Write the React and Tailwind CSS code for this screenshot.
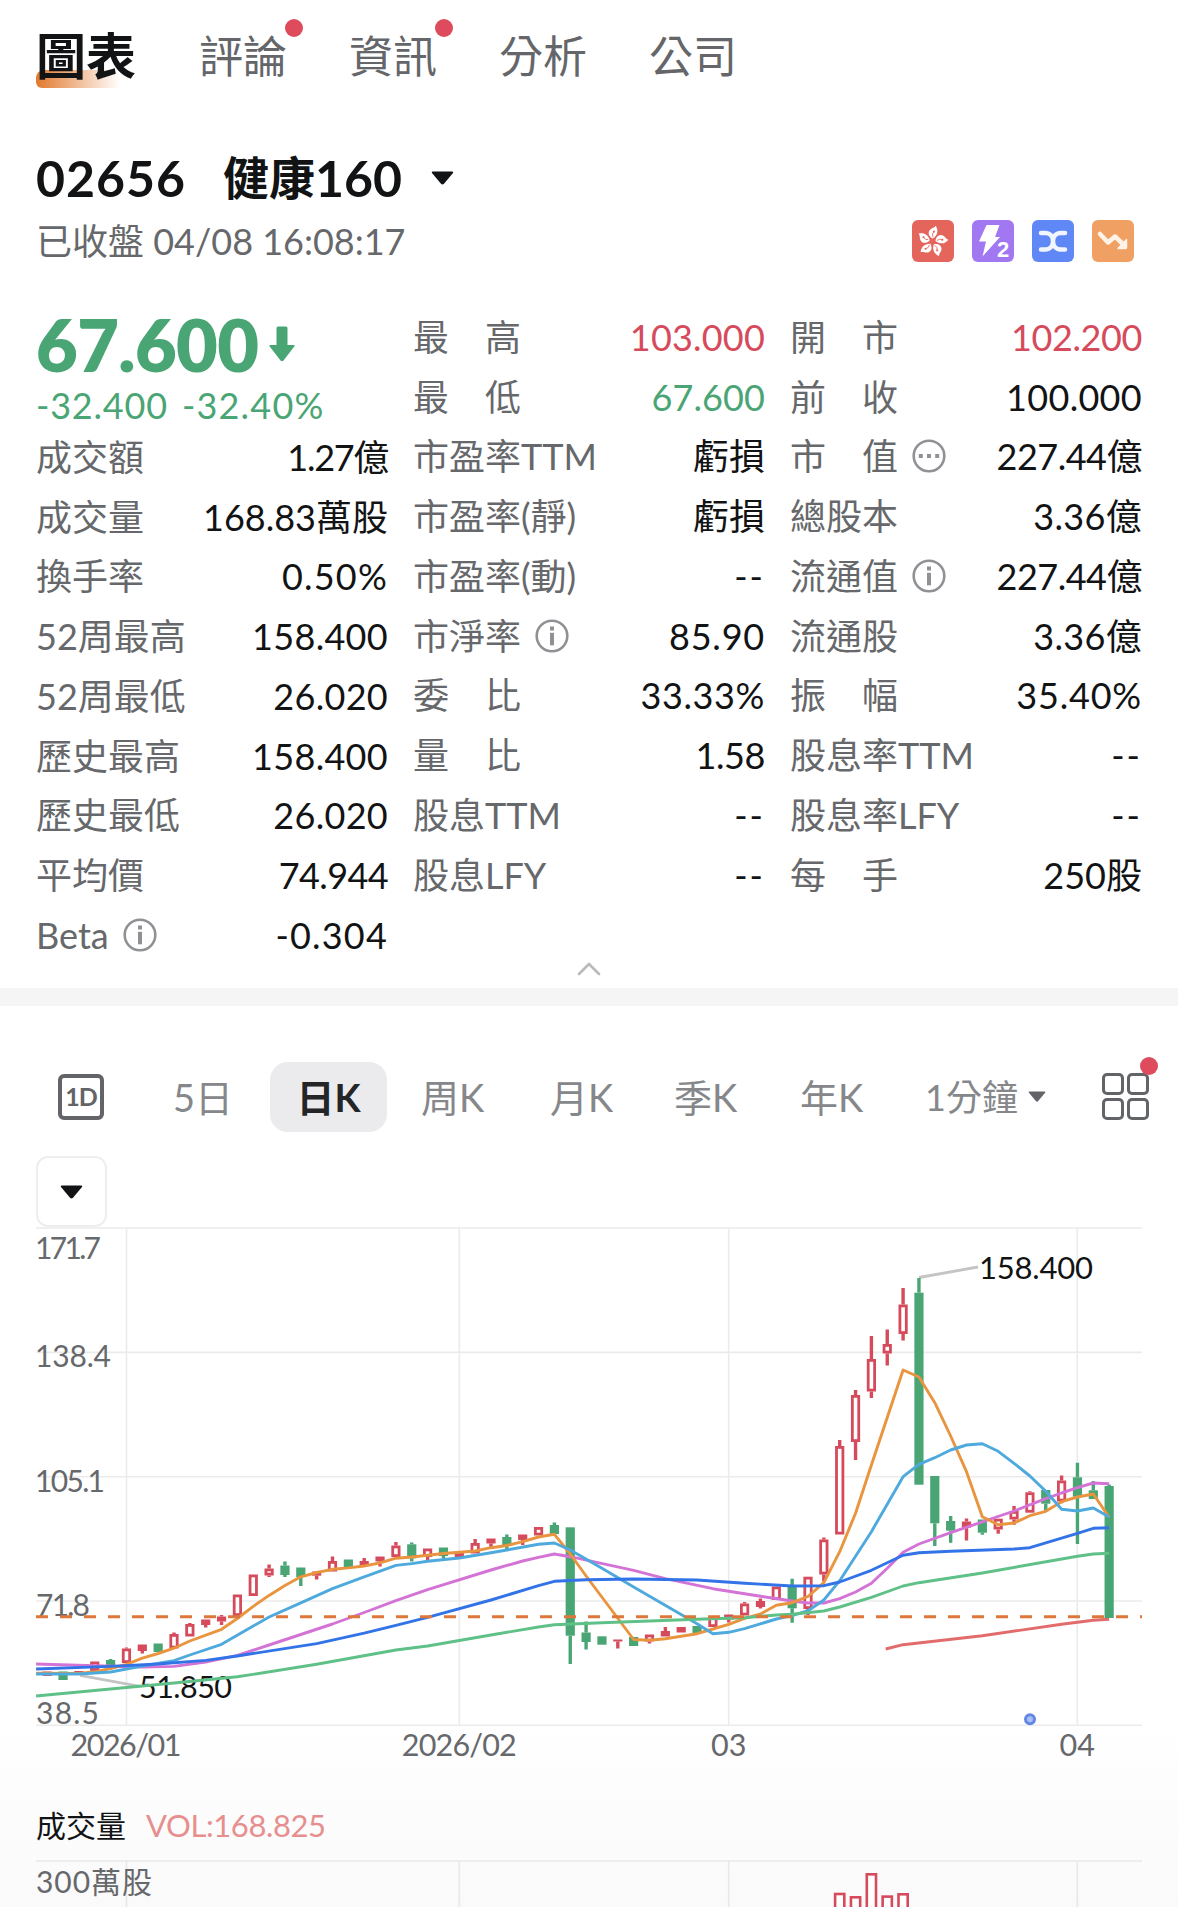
import { ChevronUp } from "lucide-react";

const UP = "#d64b5c";
const DOWN = "#4aa574";

const tabs = [
  { text: "評論", dot: true },
  { text: "資訊", dot: true },
  { text: "分析" },
  { text: "公司" },
];

// [label, value, icon, value classes]
const colA = [
  ["成交額", "1.27億", null, "tracking-[-1.3px]"],
  ["成交量", "168.83萬股"],
  ["換手率", "0.50%", null, "tracking-[1.2px]"],
  ["52周最高", "158.400", null, "tracking-[0.3px]"],
  ["52周最低", "26.020", null, "tracking-[0.3px]"],
  ["歷史最高", "158.400", null, "tracking-[0.3px]"],
  ["歷史最低", "26.020", null, "tracking-[0.3px]"],
  ["平均價", "74.944", null, "tracking-[-0.6px]"],
  ["Beta", "-0.304", "info", "tracking-[1.2px]"],
];

const colB = [
  ["最　高", "103.000", null, "text-[#d64b5c] tracking-[0.2px]"],
  ["最　低", "67.600", null, "text-[#4aa574] tracking-[0.1px]"],
  ["市盈率TTM", "虧損"],
  ["市盈率(靜)", "虧損"],
  ["市盈率(動)", "--", null, "tracking-[2px]"],
  ["市淨率", "85.90", "info", "tracking-[0.8px]"],
  ["委　比", "33.33%", null, "tracking-[0.6px]"],
  ["量　比", "1.58", null, "tracking-[-0.4px]"],
  ["股息TTM", "--", null, "tracking-[2px]"],
  ["股息LFY", "--", null, "tracking-[2px]"],
];

const colC = [
  ["開　市", "102.200", null, "text-[#d64b5c] tracking-[-0.4px]"],
  ["前　收", "100.000", null, "tracking-[0.3px]"],
  ["市　值", "227.44億", "more", "tracking-[-0.5px]"],
  ["總股本", "3.36億", null, "tracking-[0.3px]"],
  ["流通值", "227.44億", "info", "tracking-[-0.5px]"],
  ["流通股", "3.36億", null, "tracking-[0.3px]"],
  ["振　幅", "35.40%", null, "tracking-[0.8px]"],
  ["股息率TTM", "--", null, "tracking-[2px]"],
  ["股息率LFY", "--", null, "tracking-[2px]"],
  ["每　手", "250股"],
];

// [kind, body top, body bottom, high, low]  h = hollow up, r = solid up, g = down
const candles = [
  ["r", 1671.5, 1676],
  ["g", 1671.5, 1680],
  ["r", 1671, 1675],
  ["h", 1661.5, 1671],
  ["g", 1660, 1667, 1659],
  ["h", 1648.5, 1663, 1647.5],
  ["r", 1644.5, 1651, 1644.5, 1653.5],
  ["g", 1643.5, 1652],
  ["h", 1634, 1648.5, 1632.5],
  ["h", 1624, 1636.5, 1623],
  ["r", 1619.5, 1625, 1619.5, 1627.5],
  ["r", 1616.5, 1621.5, 1615, 1625],
  ["h", 1594.5, 1616],
  ["h", 1574.5, 1596],
  ["h", 1568.5, 1575.5, 1564.5, 1577],
  ["g", 1565.5, 1575, 1561.5, 1577],
  ["g", 1567.5, 1577, 1567.5, 1586],
  ["r", 1571.5, 1575.7, 1571.5, 1579.5],
  ["h", 1561, 1571.5, 1556.5],
  ["g", 1559.5, 1567],
  ["r", 1561, 1566, 1558],
  ["h", 1556.5, 1561.5, 1556.5, 1566.5],
  ["h", 1545.5, 1557, 1542],
  ["g", 1544.3, 1558.3, 1542.5, 1561.5],
  ["h", 1548.5, 1557, 1548.5, 1560.5],
  ["g", 1547.5, 1556, 1547.5, 1558.5],
  ["r", 1553, 1557.5],
  ["h", 1543, 1553.5, 1539],
  ["r", 1538.5, 1543.5, 1538.5, 1547],
  ["g", 1537, 1545, 1534.5, 1551],
  ["r", 1534.5, 1540, 1534.5, 1545],
  ["h", 1527, 1535.5],
  ["g", 1525, 1534, 1522.5, 1535.5],
  ["g", 1527.3, 1635.7, 1527.3, 1664],
  ["g", 1632.5, 1642, 1621.5, 1649.5],
  ["g", 1636.3, 1644.7],
  ["r", 1639.5, 1641.5, 1639.5, 1648.5],
  ["g", 1637, 1646],
  ["h", 1634.5, 1641.5, 1634.5, 1643.5],
  ["r", 1631, 1636.5, 1627],
  ["r", 1627, 1632.5],
  ["g", 1626, 1633.5],
  ["h", 1616, 1627],
  ["r", 1614.5, 1619.5, 1614.5, 1622.5],
  ["h", 1603.5, 1615.5, 1602],
  ["r", 1601, 1607, 1598.5, 1608.5],
  ["h", 1586.5, 1600],
  ["g", 1587, 1608.3, 1578.7, 1622.7],
  ["h", 1576.7, 1609, 1576.7, 1615],
  ["h", 1539.5, 1574.5, 1537.5, 1581.5],
  ["h", 1446, 1534.5, 1440],
  ["h", 1395, 1442, 1390, 1460],
  ["h", 1359, 1391.5, 1336, 1398],
  ["h", 1344, 1353.5, 1329.5, 1365.5],
  ["h", 1304.5, 1334, 1288, 1340.5],
  ["g", 1292.7, 1484.7, 1278],
  ["g", 1476, 1523.3, 1476, 1546],
  ["g", 1521, 1530.7, 1516, 1542.7],
  ["r", 1521.5, 1527.5, 1518.5, 1540.5],
  ["g", 1519.5, 1532.7, 1519.5, 1534.7],
  ["h", 1518.7, 1529.5, 1518.7, 1533.7],
  ["h", 1511, 1519.5, 1506, 1524.7],
  ["h", 1492.3, 1512.7, 1491.3],
  ["g", 1490, 1503.7, 1490, 1511.7],
  ["h", 1480.5, 1501.5, 1475.5, 1503.3],
  ["g", 1477.3, 1496.7, 1462.7, 1544],
  ["g", 1490.3, 1499, 1481],
  ["g", 1486, 1618, 1484.5],
];

// moving averages, [candle index, y]
const averages = [
  {
    color: "#d473d6",
    pts: [[-0.7, 1664], [3, 1665.7], [6, 1667], [8, 1666.4], [10, 1662], [12, 1655.4], [14, 1645], [18, 1624], [20, 1612.5], [22, 1600.7], [24, 1589.7], [28, 1570], [30, 1561], [31, 1557.3], [32, 1554], [33, 1556.7], [37, 1570.3], [39, 1578.7], [42, 1588.7], [45, 1596.3], [47, 1601], [48, 1603], [49, 1603], [50, 1598.7], [51, 1592], [52, 1583.3], [53, 1568.3], [54, 1552.3], [55, 1544], [57, 1532.7], [61, 1511], [63, 1498.7], [64, 1493], [65, 1487.7], [66, 1483], [67, 1483.7]],
  },
  {
    color: "#e9943f",
    pts: [[-0.7, 1673.2], [2, 1673.5], [3, 1671.8], [4, 1668.5], [5, 1664.3], [6, 1658.2], [7, 1653.5], [8, 1648.2], [9, 1641], [11, 1629.3], [12, 1618.5], [13, 1606.4], [14, 1595.4], [15, 1585.4], [16, 1576.8], [17, 1572.5], [18, 1569.3], [19, 1567.9], [20, 1566], [21, 1562.9], [22, 1558.2], [23, 1557], [25, 1553.5], [27, 1551], [28, 1547.7], [29, 1545.5], [30, 1541.7], [31, 1537], [32, 1534.3], [33, 1554], [34, 1576], [37, 1639.5], [38, 1640.2], [39, 1638.7], [41, 1633.7], [42, 1629], [43, 1624.3], [44, 1618.3], [45, 1614], [46, 1605.3], [47, 1602.7], [48, 1596.5], [49, 1582.7], [50, 1551.7], [51, 1513.3], [52, 1465], [54, 1370], [55, 1377], [56, 1402.7], [57, 1436], [58, 1471.7], [59, 1516.7], [60, 1524.7], [61, 1523], [62, 1515.7], [63, 1511.3], [64, 1501.7], [65, 1497], [66, 1494], [67, 1517.3]],
  },
  {
    color: "#4ea9dc",
    pts: [[-0.7, 1674], [2, 1674], [4, 1672], [6, 1666], [8, 1660.7], [9, 1655], [11, 1644.3], [13, 1626], [14, 1617], [16, 1602.9], [18, 1588.6], [20, 1576.8], [22, 1565.4], [23, 1563.6], [24, 1561.3], [26, 1558], [28, 1552.7], [29, 1550], [31, 1544.3], [32, 1543], [33, 1550], [35, 1568.3], [37, 1587], [41, 1623.7], [42, 1633.7], [43, 1632.3], [44, 1628.7], [46, 1619], [47, 1615.7], [48, 1610.7], [49, 1600], [50, 1580.7], [52, 1531.7], [54, 1476.7], [55, 1464.3], [56, 1457.7], [57, 1450], [58, 1445], [59, 1443.7], [60, 1451.3], [61, 1463.3], [62, 1476], [63, 1491.3], [64, 1509.3], [65, 1511], [66, 1508], [67, 1517]],
  },
  {
    color: "#5fc088",
    pts: [[-0.7, 1696], [6, 1686], [8, 1683], [12, 1676.8], [17, 1664.3], [22, 1650], [24, 1646], [28, 1635], [31, 1627], [32, 1624.7], [35, 1622.7], [41, 1619.3], [44, 1617.7], [46, 1615], [47, 1614.3], [49, 1611], [50, 1607], [52, 1597.3], [54, 1586], [55, 1582.7], [59, 1573], [65, 1556.3], [66, 1554], [67, 1553.3]],
  },
  {
    color: "#3273e8",
    pts: [[-0.7, 1669], [4, 1666.4], [7, 1664], [10, 1660.4], [12, 1656], [17, 1643.6], [20, 1633.2], [22, 1625.4], [24, 1617.3], [28, 1600], [31, 1585.7], [32, 1581.3], [34, 1579.7], [37, 1579], [41, 1580], [44, 1583.3], [47, 1586], [49, 1585.7], [50, 1582], [52, 1570.3], [54, 1555.3], [55, 1552.7], [57, 1551.3], [61, 1549], [62, 1547.7], [65, 1533.3], [66, 1528.3], [67, 1527.7]],
  },
  {
    color: "#e26c6c",
    pts: [[52.9, 1649], [54, 1644.7], [59, 1635.7], [64, 1624.3], [66, 1620.3], [67, 1619.3]],
  },
];

const gridX = [126.5, 459.3, 728.7, 1077.3];
const gridY = [1228, 1352.4, 1476.7, 1601, 1725.3];
const xAt = (i) => 47.2 + 15.85 * i;

export default function App() {
  return (
    <div className="w-[1178px] h-[1907px] overflow-hidden bg-linear-to-b from-white from-90% to-[#fafafa] font-[Lato,'Noto_Sans_CJK_TC',sans-serif] text-[#121314]">
      {/* Page tabs */}
      <nav className="flex h-[111px] items-center pl-[36px] leading-none">
        <div className="relative w-[163px] text-[50px] font-bold">
          <span className="absolute left-0 top-[39px] h-[18px] w-[84px] rounded-bl-md rounded-tl-lg bg-linear-to-r from-[#e2792f] to-transparent"></span>
          <span className="relative">圖表</span>
        </div>
        {tabs.map((t) => (
          <div key={t.text} className="relative w-[150px] text-[44px] text-[#646669]">
            {t.text}
            {t.dot && <Dot className="left-[86px] -top-[15px]" />}
          </div>
        ))}
      </nav>

      {/* Stock title */}
      <header className="px-[36px]">
        <div className="flex h-[133px] items-center leading-none font-bold">
          <span className="text-[50px] tracking-[1px]">02656</span>
          <span className="ml-[37px] text-[46px]">健康</span>
          <span className="text-[50px]">160</span>
          <Caret className="ml-[29px] h-[14px] w-[23px]" />
        </div>
        <div className="-mt-[33px] flex h-[60px] items-center justify-between">
          <span className="text-[36px] leading-none text-[#66686b]">已收盤 04/08 16:08:17</span>
          <div className="mr-[8px] flex gap-[18px]">
            <Badges />
          </div>
        </div>
      </header>

      {/* Quote grid */}
      <section className="mt-[36px] grid h-[658px] grid-cols-3 gap-x-[25px] px-[36px]">
        <div>
          <div className="h-[120px] text-[#4aa574]">
            <div className="flex h-[74px] items-center">
              <span className="text-[72px] font-extrabold leading-none tracking-[-0.6px]">67.600</span>
              <svg viewBox="0 0 26 36" className="ml-[11px] h-[36px] w-[26px]">
                <path d="M7.5 2q0-1.500 1.500-1.500h8q1.500 0 1.500 1.500v17h6q2 0 .8 1.600L14.500 34.500q-1.500 1.500-3 0L.7 20.600Q-.5 19 1.500 19h6z" fill="currentColor" />
              </svg>
            </div>
            <div className="flex h-[44px] items-center gap-[14px] pt-[4px] text-[36px] leading-none tracking-[0.8px]">
              <span>-32.400</span>
              <span className="tracking-[1.200px]">-32.40%</span>
            </div>
          </div>
          <Rows rows={colA} />
        </div>
        <Rows rows={colB} />
        <Rows rows={colC} />
      </section>
      <div className="flex h-[23px] items-start justify-center text-[#b9babc]">
        <ChevronUp className="-mt-[16px] h-[40px] w-[44px]" strokeWidth={1.6} />
      </div>
      <div className="h-[18px] bg-[#f5f5f5]"></div>

      {/* Period selector */}
      <div className="flex h-[181px] items-center pl-[58px] text-[38px] leading-none text-[#85878a]">
        <div className="flex size-[46px] items-center justify-center rounded-[6px] border-4 border-[#626467] text-[25px] font-bold tracking-[-1px] text-[#626467]">
          1D
        </div>
        <span className="ml-[69px] w-[97px]">5日</span>
        <span className="flex h-[70px] w-[117px] items-center justify-center rounded-[18px] bg-[#ebebed] font-bold text-[#232527]">
          日K
        </span>
        <span className="ml-[34px] w-[129px]">周K</span>
        <span className="w-[124px]">月K</span>
        <span className="w-[126px]">季K</span>
        <span className="w-[125px]">年K</span>
        <span className="w-[103px] whitespace-nowrap text-[36px]">1分鐘</span>
        <Caret className="h-[11px] w-[18px] text-[#626467]" />
        <div className="relative ml-[56px] grid size-[47px] grid-cols-2 gap-[3px]">
          <i className="rounded-[5px] border-[3.500px] border-[#626467]"></i>
          <i className="rounded-[5px] border-[3.500px] border-[#626467]"></i>
          <i className="rounded-[5px] border-[3.500px] border-[#626467]"></i>
          <i className="rounded-[5px] border-[3.500px] border-[#626467]"></i>
          <Dot className="-top-[16px] left-[38px]" />
        </div>
      </div>
      <div className="-mt-[31px] ml-[36px] flex size-[71px] items-center justify-center rounded-[12px] border-2 border-[#eeeeef]">
        <Caret className="h-[14px] w-[23px]" />
      </div>

      <PriceChart />

      {/* Volume */}
      <div className="flex h-[60px] items-center pl-[36px] text-[30px] leading-none">
        <span>成交量</span>
        <span className="ml-[20px] text-[31px] tracking-[-0.4px] text-[#e78f8f]">VOL:168.825</span>
      </div>
      <VolumeChart />
    </div>
  );
}

function Rows({ rows }) {
  return (
    <div>
      {rows.map(([label, value, icon, tone]) => (
        <div key={label} className="flex h-[59.750px] items-center justify-between whitespace-nowrap text-[36px] leading-none">
          <span className="flex items-center text-[#66686b]">
            {label}
            {icon && <RoundIcon kind={icon} />}
          </span>
          <span className={tone || ""}>{value}</span>
        </div>
      ))}
    </div>
  );
}

function RoundIcon({ kind }) {
  return (
    <svg viewBox="0 0 34 34" className="ml-[14px] size-[34px] text-[#8f9194]" fill="currentColor">
      <circle cx="17" cy="17" r="15.300" fill="none" stroke="currentColor" strokeWidth="2.600" />
      {kind === "info" ? (
        <>
          <rect x="15" y="7.500" width="4" height="4" />
          <rect x="15" y="13.800" width="4" height="12.500" />
        </>
      ) : (
        <>
          <rect x="6.800" y="15" width="4" height="4" />
          <rect x="15" y="15" width="4" height="4" />
          <rect x="23.200" y="15" width="4" height="4" />
        </>
      )}
    </svg>
  );
}

function Dot({ className }) {
  return <span className={`absolute size-[18px] rounded-full bg-[#dd4b5c] ${className}`}></span>;
}

function Caret({ className }) {
  return (
    <svg viewBox="0 0 23 14" className={className}>
      <path d="M2 .5h19q2 0 .8 1.700L13 12.800q-1.500 1.500-3 0L1.200 2.200Q0 .5 2 .5z" fill="currentColor" />
    </svg>
  );
}

function Badges() {
  return (
    <>
      <svg viewBox="0 0 42 42" className="size-[42px]">
        <rect width="42" height="42" rx="6" fill="#e4655b" />
        {[8, 80, 152, 224, 296].map((a) => (
          <g key={a} transform={`rotate(${a} 20.500 21.500)`}>
            <path d="M20.500 18.500C15.500 17 14 12.500 17 9.500 18.500 8 20.500 8 21.500 5.500 25 9.500 25 14.500 20.500 18.500z" fill="#fff" />
            <path d="M20.300 17q-1.800-3 .2-5.500" fill="none" stroke="#e4655b" strokeWidth=".8" />
            <circle cx="20.500" cy="11.500" r="1" fill="#e4655b" />
          </g>
        ))}
      </svg>
      <svg viewBox="0 0 42 42" className="size-[42px]">
        <rect width="42" height="42" rx="6" fill="#a178f2" />
        <path d="M14.500 5h13l-4.500 12h5L10.500 36.500 14 21.500H7z" fill="#fff" />
        <text x="25" y="36.500" fontSize="22" fontWeight="700" fontFamily="Liberation Sans" fill="#fff">
          2
        </text>
      </svg>
      <svg viewBox="0 0 42 42" className="size-[42px]">
        <rect width="42" height="42" rx="6" fill="#5f88f6" />
        <path d="M9 13h4c6 0 8 4.500 8 8.200s-2 8.300-8 8.300H9M33 13h-4c-6 0-8 4.500-8 8.200s2 8.300 8 8.300h4" fill="none" stroke="#f1f5ff" strokeWidth="4.500" strokeLinecap="round" />
      </svg>
      <svg viewBox="0 0 42 42" className="size-[42px]">
        <rect width="42" height="42" rx="6" fill="#f0a063" />
        <path d="M8 14l8 8.500 7-6 9 8.500" fill="none" stroke="#fff3e8" strokeWidth="4.500" strokeLinecap="round" strokeLinejoin="round" />
        <path d="M34.500 19.500v8q0 1-1 1h-7.500z" fill="#fff3e8" stroke="#fff3e8" strokeWidth="1.500" strokeLinejoin="round" />
      </svg>
    </>
  );
}

function Candle({ i, data }) {
  const [kind, top, bottom, high = top, low = bottom] = data;
  const x = xAt(i);
  const color = kind === "g" ? DOWN : UP;
  return (
    <g>
      <path d={`M${x} ${high}V${top}M${x} ${bottom}V${low}`} stroke={color} strokeWidth="3.400" />
      {kind === "h" ? (
        <rect x={x - 3.2} y={top + 1.4} width="6.400" height={bottom - top - 2.8} fill="#fff" stroke={color} strokeWidth="2.800" />
      ) : (
        <rect x={x - 4.6} y={top} width="9.200" height={bottom - top} fill={color} />
      )}
    </g>
  );
}

function PriceChart() {
  return (
    <svg viewBox="0 1227 1178 568" className="block h-[568px] w-full [font-kerning:none]" fontFamily="Lato">
      <g stroke="#ebebec" strokeWidth="1.600">
        {gridY.map((y) => (
          <path key={y} d={`M36 ${y}H1142`} />
        ))}
        {gridX.map((x) => (
          <path key={x} d={`M${x} 1228V1725`} />
        ))}
      </g>
      <g fill="#66686b" fontSize="30">
        <text x="35" y="1259" textLength="66">171.7</text>
        <text x="35" y="1366.500" textLength="76">138.4</text>
        <text x="35" y="1491.500" textLength="70">105.1</text>
        <text x="36" y="1615.500" textLength="54">71.8</text>
        <text x="36" y="1723.500" textLength="63">38.5</text>
      </g>
      <g stroke="#c4c4c5" strokeWidth="2.800">
        <path d="M80 1675.400L140 1686.400" />
        <path d="M919 1277.500L978 1267" />
      </g>
      {candles.map((c, i) => (
        <Candle key={i} i={i} data={c} />
      ))}
      <text x="139" y="1697.500" fontSize="30.500" textLength="93" fill="#121314">51.850</text>
      {averages.map((m) => (
        <polyline
          key={m.color}
          points={m.pts.map(([i, y]) => `${xAt(i)},${y}`).join(" ")}
          fill="none"
          stroke={m.color}
          strokeWidth="2.900"
          strokeLinejoin="round"
        />
      ))}
      <path d="M36 1616.700H1142" stroke="#dd783a" strokeWidth="3" strokeDasharray="12 12" />
      <text x="979" y="1279" fontSize="31" textLength="114" fill="#121314">158.400</text>
      <circle cx="1030" cy="1719.300" r="4.500" fill="#a9bff8" stroke="#6486e4" strokeWidth="3" />
      <g fill="#66686b" fontSize="30.500" textAnchor="middle">
        <text x="126" y="1756" textLength="111">2026/01</text>
        <text x="459.300" y="1756" textLength="115">2026/02</text>
        <text x="728.700" y="1756">03</text>
        <text x="1077.300" y="1756">04</text>
      </g>
    </svg>
  );
}

function VolumeChart() {
  const bars = [1892.7, 1896, 1873, 1895.3, 1893];
  return (
    <svg viewBox="0 1855 1178 52" className="block h-[52px] w-full" fontFamily="Lato, 'Noto Sans CJK TC'">
      <g stroke="#e8e8e9" strokeWidth="1.600">
        <path d="M36 1861H1142" />
        {gridX.map((x) => (
          <path key={x} d={`M${x} 1861V1907`} />
        ))}
      </g>
      <text x="36" y="1893" fontSize="30" textLength="116" fill="#66686b">300萬股</text>
      {bars.map((y, k) => (
        <rect key={k} x={xAt(50 + k) - 4.6} y={y + 1.3} width="9.200" height="40" fill="#fff" stroke={UP} strokeWidth="2.600" />
      ))}
    </svg>
  );
}
